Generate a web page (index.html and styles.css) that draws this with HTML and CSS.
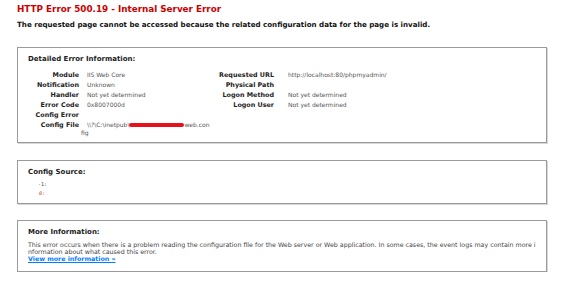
FILE: index.html
```html
<!DOCTYPE html>
<html lang="en">
<head>
  <meta charset="UTF-8">
  <title>IIS 10.0 Detailed Error - 500.19 - Internal Server Error</title>
  <link rel="stylesheet" href="styles.css">
</head>
<body>

  <div id="content">
    <h2 class="title">HTTP Error 500.19 - Internal Server Error</h2>
    <h3 class="subtitle">The requested page cannot be accessed because the related configuration data for the page is invalid.</h3>

    <div class="box details-box">
      <div class="legend">Detailed Error Information:</div>
      <div class="details">
        <div class="detail-col left">
          <div class="th">Module</div><div class="td">IIS Web Core</div>
          <div class="th">Notification</div><div class="td">Unknown</div>
          <div class="th">Handler</div><div class="td">Not yet determined</div>
          <div class="th">Error Code</div><div class="td">0x8007000d</div>
          <div class="th">Config Error</div><div class="td"></div>
          <div class="th">Config File</div>
          <div class="td multi">\\?\C:\inetpub\<span class="redact"></span>web.con<br>fig</div>
        </div>
        <div class="detail-col right">
          <div class="th">Requested URL</div><div class="td">http://localhost:80/phpmyadmin/</div>
          <div class="th">Physical Path</div><div class="td"></div>
          <div class="th">Logon Method</div><div class="td">Not yet determined</div>
          <div class="th">Logon User</div><div class="td">Not yet determined</div>
        </div>
      </div>
    </div>

    <div class="box source-box">
      <div class="legend">Config Source:</div>
      <pre class="source"><span class="ln">-1:</span>
<span class="ln hot">0:</span></pre>
    </div>

    <div class="box more-box">
      <div class="legend">More Information:</div>
      <p class="more-text">This error occurs when there is a problem reading the configuration file for the Web server or Web application. In some cases, the event logs may contain more i<br>nformation about what caused this error.</p>
      <a class="more-link" href="#">View more information &raquo;</a>
    </div>
  </div>

</body>
</html>
```

FILE: styles.css
```css
  body {
    margin: 0;
    font-family: 'DejaVu Sans', Verdana, sans-serif;
    background-color: #ffffff;
    color: #222222;
  }
  #content {
    padding: 3px 18px 0 17px;
  }
  .title {
    margin: 0;
    font-size: 8.8px;
    line-height: 12px;
    color: #cc0000;
  }
  .subtitle {
    margin: 5px 0 0 0;
    font-size: 7.1px;
    line-height: 10px;
    color: #111111;
  }
  .box {
    border: 1px solid #9a9a9a;
    box-shadow: 1px 1px 0 #d6d6d6;
    padding: 6px 10px 10px 10px;
  }
  .details-box {
    margin-top: 17px;
    padding-bottom: 12px;
  }
  .source-box {
    margin-top: 17px;
    padding-bottom: 5px;
  }
  .more-box {
    margin-top: 16px;
    padding-bottom: 9px;
  }
  .legend {
    font-weight: bold;
    font-size: 7px;
    line-height: 10px;
    color: #222222;
  }
  .details {
    display: flex;
    margin-top: 6px;
  }
  .detail-col {
    display: grid;
    grid-auto-rows: 10px;
    font-size: 6px;
    line-height: 10px;
  }
  .left {
    width: 188px;
    grid-template-columns: 51px 1fr;
    column-gap: 2px;
  }
  .right {
    grid-template-columns: 58px 1fr;
    column-gap: 8px;
  }
  .th {
    text-align: right;
    font-weight: bold;
    font-size: 6.4px;
    color: #222222;
    white-space: nowrap;
  }
  .td {
    color: #555555;
    padding-left: 6px;
    white-space: nowrap;
  }
  .td.multi {
    padding-left: 0;
    text-indent: 6px;
    line-height: 8px;
    padding-top: 1px;
  }
  .redact {
    display: inline-block;
    width: 55px;
    height: 4px;
    background-color: #e8101a;
    border-radius: 2px;
    vertical-align: 0;
  }
  .source {
    margin: 3px 0 0 10px;
    font-family: 'DejaVu Sans Mono', monospace;
    font-size: 5px;
    line-height: 9px;
    color: #444444;
  }
  .ln {
    display: inline-block;
    width: 7px;
    text-align: right;
  }
  .ln.hot {
    color: #cc4400;
    font-style: italic;
  }
  .more-text {
    margin: 4px 0 0 0;
    font-size: 6.3px;
    line-height: 7px;
    color: #444444;
  }
  .more-link {
    display: block;
    font-size: 6.3px;
    line-height: 7px;
    font-weight: bold;
    color: #007eff;
  }
```
